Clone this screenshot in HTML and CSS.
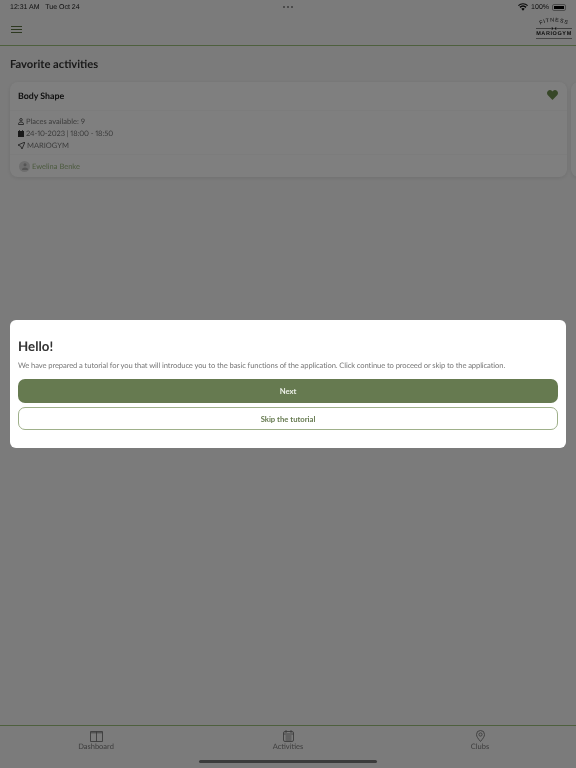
FILE: index.html
```html
<!DOCTYPE html>
<html lang="en">
<head>
    <meta charset="UTF-8">
    <meta name="viewport" content="width=device-width, initial-scale=1.0">
    <title>Mariogym</title>
    <link rel="stylesheet" href="styles.css">
</head>
<body>
    <div class="app">
        <div class="status-bar">
            <span class="status-time">12:31 AM&nbsp;&nbsp; Tue Oct 24</span>
            <span class="status-dots"><i></i><i></i><i></i></span>
            <span class="status-right">
                <svg class="wifi" width="10" height="8" viewBox="0 0 20 15">
                    <path d="M10 15 6.6 11.2a5 5 0 0 1 6.8 0zM5 9.4 2.9 7.1a10.500 10.500 0 0 1 14.200 0L15 9.400a7.500 7.500 0 0 0-10 0zM1.500 5.500 0 3.800a14.800 14.800 0 0 1 20 0l-1.500 1.700a12.500 12.500 0 0 0-17 0z" fill="#111"/>
                </svg>
                <span>100%</span>
                <span class="battery"><span class="battery-fill"></span></span>
            </span>
        </div>

        <header class="top-bar">
            <button class="menu-btn" aria-label="Menu"><span></span><span></span><span></span></button>
            <div class="logo">
                <svg width="42" height="26" viewBox="0 1 42 26">
                    <path id="logo-arc" d="M7 9Q21 2 35 9" fill="none"/>
                    <text class="logo-top"><textPath href="#logo-arc" startOffset="50%" text-anchor="middle">FITNESS</textPath></text>
                    <path d="M3 12.500h15M24 12.500h15" stroke="#333" stroke-width=".6"/>
                    <path d="M18.500 11.500h1.500v2h-1.500zM22 11.500h1.500v2H22zM20 12.200h2v.6h-2z" fill="#222"/>
                    <text class="logo-name" x="21" y="19" text-anchor="middle">MARIOGYM</text>
                    <path d="M3 22.500h36" stroke="#888" stroke-width="1.200"/>
                </svg>
            </div>
        </header>

        <main class="content">
            <h1>Favorite activities</h1>
            <div class="cards">
                <article class="card">
                    <div class="card-head">
                        <h2>Body Shape</h2>
                        <svg class="heart" width="11" height="10" viewBox="0 0 22 20">
                            <path d="M11 20 1.800 10.600C-.6 8.100-.6 4.200 1.800 1.800s6-2.400 8.300 0l.9 1 .9-1c2.300-2.400 5.900-2.400 8.300 0s2.400 6.300 0 8.800z" fill="#6f8f50"/>
                        </svg>
                    </div>
                    <div class="card-info">
                        <div class="info-row">
                            <svg width="6" height="7" viewBox="0 0 12 14"><circle cx="6" cy="3.500" r="2.500" fill="none" stroke="#333" stroke-width="1.600"/><path d="M1 13v-1.500C1 9.500 3 8 6 8s5 1.500 5 3.500V13z" fill="none" stroke="#333" stroke-width="1.600"/></svg>
                            <span>Places available: 9</span>
                        </div>
                        <div class="info-row">
                            <svg width="6" height="7" viewBox="0 0 12 14"><path d="M2.500 0h1.500v2h4V0h1.500v2H12v12H0V2h2.500z" fill="#333"/></svg>
                            <span class="info-date">24-10-2023 | 18:00 - 18:50</span>
                        </div>
                        <div class="info-row">
                            <svg width="7" height="7" viewBox="0 0 14 14"><path d="M14 0 0 6l5.500 2.500L8 14z" fill="none" stroke="#333" stroke-width="1.600" stroke-linejoin="round"/></svg>
                            <span>MARIOGYM</span>
                        </div>
                    </div>
                    <div class="card-foot">
                        <span class="avatar">
                            <svg width="6" height="7" viewBox="0 0 12 14"><circle cx="6" cy="3.500" r="3" fill="#aaa"/><path d="M0 14c0-3.500 2.500-5 6-5s6 1.500 6 5z" fill="#aaa"/></svg>
                        </span>
                        <span class="trainer">Ewelina Benke</span>
                    </div>
                </article>
                <div class="card card-next"></div>
            </div>
        </main>

        <nav class="tab-bar">
            <a class="tab">
                <svg width="13" height="11" viewBox="0 0 13 11"><path d="M.5.500h12v10H.5zM6.500.500v10M.5 1.800h12" fill="none" stroke="#777" stroke-width=".9"/></svg>
                <span>Dashboard</span>
            </a>
            <a class="tab">
                <svg width="11" height="12" viewBox="0 0 11 12"><rect x=".5" y="1.500" width="10" height="10" rx="1.500" fill="none" stroke="#777" stroke-width=".9"/><path d="M3 0v3M8 0v3M.5 4h10M2.500 6h6M2.500 8h6M2.500 10h6" stroke="#777" stroke-width=".8"/></svg>
                <span>Activities</span>
            </a>
            <a class="tab">
                <svg width="9" height="12" viewBox="0 0 9 12"><path d="M4.500 11.500C2 8.500.5 6.500.5 4.500a4 4 0 0 1 8 0c0 2-1.500 4-4 7z" fill="none" stroke="#777" stroke-width=".9"/><circle cx="4.500" cy="4.500" r="1.600" fill="none" stroke="#777" stroke-width=".9"/></svg>
                <span>Clubs</span>
            </a>
        </nav>
        <div class="home-indicator"></div>

        <div class="overlay">
            <div class="modal">
                <h3>Hello!</h3>
                <p>We have prepared a tutorial for you that will introduce you to the basic functions of the application. Click continue to proceed or skip to the application.</p>
                <button class="btn btn-primary">Next</button>
                <button class="btn btn-outline">Skip the tutorial</button>
            </div>
        </div>
    </div>
</body>
</html>
```

FILE: styles.css
```css
* {
    box-sizing: border-box;
}
body {
    margin: 0;
    font-family: Lato, "Noto Sans", Arial, sans-serif;
    background: #f6f6f6;
    color: #222;
    text-rendering: geometricPrecision;
}
.app {
    position: relative;
    width: 576px;
    height: 768px;
    display: flex;
    flex-direction: column;
    overflow: hidden;
    will-change: opacity;
}
.status-bar {
    height: 14px;
    padding: 0 10px 0;
    display: flex;
    align-items: center;
    font-family: "Liberation Sans", Arial, sans-serif;
    font-size: 7px;
    color: #222;
}
.status-time {
    flex: 1;
}
.status-dots {
    display: flex;
    gap: 2px;
}
.status-dots i {
    width: 2px;
    height: 2px;
    border-radius: 50%;
    background: #777;
}
.status-right {
    flex: 1;
    display: flex;
    align-items: center;
    justify-content: flex-end;
    gap: 3px;
}
.battery {
    width: 14px;
    height: 7px;
    padding: 1px;
    border: 1px solid #999;
    border-radius: 2px;
}
.battery-fill {
    display: block;
    height: 100%;
    background: #000;
}
.top-bar {
    height: 32px;
    padding: 0 1px 0 11px;
    display: flex;
    align-items: center;
    justify-content: space-between;
    border-bottom: 1px solid #9cc07c;
}
.menu-btn {
    width: 11px;
    padding: 0;
    border: 0;
    background: none;
    display: flex;
    flex-direction: column;
    gap: 2px;
}
.menu-btn span {
    height: 1px;
    background: #5a7040;
}
.logo {
    height: 26px;
    display: flex;
    align-items: flex-end;
}
.logo-top {
    font-family: "Liberation Sans", Arial, sans-serif;
    font-size: 5.500px;
    letter-spacing: .8px;
    fill: #222;
}
.logo-name {
    font-family: "Liberation Sans", Arial, sans-serif;
    font-size: 5.500px;
    font-weight: bold;
    letter-spacing: .6px;
    fill: #222;
}
.content {
    flex: 1;
    padding: 11px 0 0 10px;
}
h1 {
    margin: 0 0 10px;
    font-size: 11.200px;
    line-height: 15px;
    font-weight: 700;
    color: #333;
}
.cards {
    display: flex;
    gap: 4px;
}
.card {
    flex: none;
    width: 557px;
    height: 95px;
    background: #fff;
    border-radius: 8px;
    box-shadow: 0 1px 4px rgba(0,0,0,0.1);
}
.card-next {
    width: 40px;
}
.card-head {
    height: 29px;
    padding: 8px 9px 0 8px;
    display: flex;
    justify-content: space-between;
    align-items: flex-start;
    border-bottom: 1px solid #f8f8f8;
}
h2 {
    margin: 0;
    font-size: 8.800px;
    line-height: 12px;
    font-weight: 700;
    color: #222;
}
.card-info {
    height: 44px;
    padding: 4px 8px 0;
    border-bottom: 1px solid #f8f8f8;
}
.info-row {
    height: 12px;
    display: flex;
    align-items: center;
    gap: 2px;
    font-size: 7.500px;
    color: #777;
}
.info-date {
    font-variant-numeric: proportional-nums;
    letter-spacing: -.1px;
}
.card-foot {
    padding: 6px 9px;
    display: flex;
    align-items: center;
    gap: 2px;
}
.avatar {
    width: 11px;
    height: 11px;
    border-radius: 50%;
    background: #ddd;
    display: flex;
    align-items: center;
    justify-content: center;
}
.trainer {
    font-size: 7.500px;
    color: #98b57e;
}
.tab-bar {
    height: 43px;
    padding-top: 2px;
    display: grid;
    grid-template-columns: repeat(3, 1fr);
    border-top: 1px solid #9cc07c;
}
.tab {
    display: flex;
    flex-direction: column;
    align-items: center;
    height: 23px;
    justify-content: flex-end;
    font-size: 7.500px;
    line-height: 9px;
    color: #7a7a7a;
}
.home-indicator {
    position: absolute;
    left: 199px;
    bottom: 5px;
    width: 178px;
    height: 3px;
    border-radius: 2px;
    background: #777;
}
.overlay {
    position: absolute;
    inset: 0;
    padding: 320px 10px 0;
    background: rgba(0,0,0,0.5);
}
.modal {
    height: 128px;
    padding: 17px 8px 0;
    background: #fff;
    border-radius: 6px;
}
h3 {
    margin: 0;
    font-size: 13.300px;
    line-height: 18px;
    font-weight: 700;
    color: #333;
}
.modal p {
    margin: 4px 0 8px;
    font-size: 7.600px;
    letter-spacing: -.1px;
    line-height: 12px;
    color: #777;
    white-space: nowrap;
}
.btn {
    display: block;
    width: 100%;
    padding: 0;
    font-family: inherit;
    font-size: 7.700px;
    font-weight: 700;
    border-radius: 7px;
}
.btn-primary {
    height: 24px;
    border: 0;
    color: #eef2ea;
    background: #667a50;
    margin-bottom: 4px;
}
.btn-outline {
    height: 23px;
    border: 1px solid #9fb08a;
    color: #667a50;
    background: #fff;
}
```
